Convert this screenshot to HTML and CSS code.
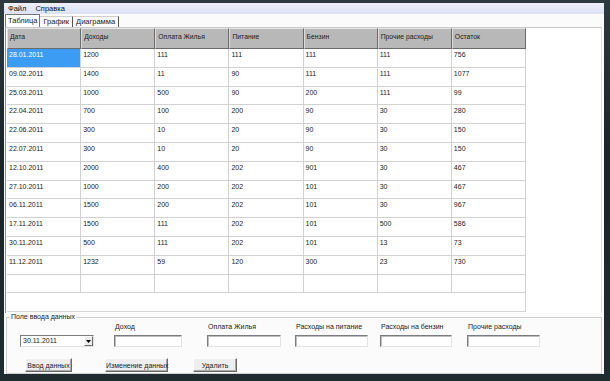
FILE: index.html
```html
<!DOCTYPE html>
<html lang="ru">
<head>
    <meta charset="UTF-8">
    <meta name="viewport" content="width=device-width, initial-scale=1.0">
    <title>Учёт расходов</title>
    <link rel="stylesheet" href="styles.css">
</head>
<body>
    <div class="window">
        <nav class="menubar">
            <span>Файл</span>
            <span>Справка</span>
        </nav>
        <div class="tabs">
            <span class="tab active">Таблица</span>
            <span class="tab">График</span>
            <span class="tab">Диаграмма</span>
        </div>
        <div class="grid-panel">
            <div class="grid">
                <div class="row head">
                    <div class="cell">Дата</div>
                    <div class="cell">Доходы</div>
                    <div class="cell">Оплата Жилья</div>
                    <div class="cell">Питание</div>
                    <div class="cell">Бензин</div>
                    <div class="cell">Прочие расходы</div>
                    <div class="cell">Остаток</div>
                </div>
                <div class="row">
                    <div class="cell sel">28.01.2011</div><div class="cell">1200</div><div class="cell">111</div><div class="cell">111</div><div class="cell">111</div><div class="cell">111</div><div class="cell">756</div>
                </div>
                <div class="row">
                    <div class="cell">09.02.2011</div><div class="cell">1400</div><div class="cell">11</div><div class="cell">90</div><div class="cell">111</div><div class="cell">111</div><div class="cell">1077</div>
                </div>
                <div class="row">
                    <div class="cell">25.03.2011</div><div class="cell">1000</div><div class="cell">500</div><div class="cell">90</div><div class="cell">200</div><div class="cell">111</div><div class="cell">99</div>
                </div>
                <div class="row">
                    <div class="cell">22.04.2011</div><div class="cell">700</div><div class="cell">100</div><div class="cell">200</div><div class="cell">90</div><div class="cell">30</div><div class="cell">280</div>
                </div>
                <div class="row">
                    <div class="cell">22.06.2011</div><div class="cell">300</div><div class="cell">10</div><div class="cell">20</div><div class="cell">90</div><div class="cell">30</div><div class="cell">150</div>
                </div>
                <div class="row">
                    <div class="cell">22.07.2011</div><div class="cell">300</div><div class="cell">10</div><div class="cell">20</div><div class="cell">90</div><div class="cell">30</div><div class="cell">150</div>
                </div>
                <div class="row">
                    <div class="cell">12.10.2011</div><div class="cell">2000</div><div class="cell">400</div><div class="cell">202</div><div class="cell">901</div><div class="cell">30</div><div class="cell">467</div>
                </div>
                <div class="row">
                    <div class="cell">27.10.2011</div><div class="cell">1000</div><div class="cell">200</div><div class="cell">202</div><div class="cell">101</div><div class="cell">30</div><div class="cell">467</div>
                </div>
                <div class="row">
                    <div class="cell">06.11.2011</div><div class="cell">1500</div><div class="cell">200</div><div class="cell">202</div><div class="cell">101</div><div class="cell">30</div><div class="cell">967</div>
                </div>
                <div class="row">
                    <div class="cell">17.11.2011</div><div class="cell">1500</div><div class="cell">111</div><div class="cell">202</div><div class="cell">101</div><div class="cell">500</div><div class="cell">586</div>
                </div>
                <div class="row">
                    <div class="cell">30.11.2011</div><div class="cell">500</div><div class="cell">111</div><div class="cell">202</div><div class="cell">101</div><div class="cell">13</div><div class="cell">73</div>
                </div>
                <div class="row">
                    <div class="cell">11.12.2011</div><div class="cell">1232</div><div class="cell">59</div><div class="cell">120</div><div class="cell">300</div><div class="cell">23</div><div class="cell">730</div>
                </div>
                <div class="row">
                    <div class="cell"></div><div class="cell"></div><div class="cell"></div><div class="cell"></div><div class="cell"></div><div class="cell"></div><div class="cell"></div>
                </div>
                <div class="filler"></div>
            </div>
        </div>
        <fieldset class="groupbox">
            <legend>Поле ввода данных</legend>
            <div class="fields">
                <div class="datepicker">
                    <span>30.11.2011</span>
                    <span class="drop">
                        <svg width="5" height="3" viewBox="0 0 5 3"><path d="M0 0h5L2.5 3z" fill="#000"/></svg>
                    </span>
                </div>
                <div class="field f-income">
                    <label>Доход</label>
                    <div class="input"></div>
                </div>
                <div class="field f-rent">
                    <label>Оплата Жилья</label>
                    <div class="input"></div>
                </div>
                <div class="field f-food">
                    <label>Расходы на питание</label>
                    <div class="input"></div>
                </div>
                <div class="field f-fuel">
                    <label>Расходы на бензин</label>
                    <div class="input"></div>
                </div>
                <div class="field f-other">
                    <label>Прочие расходы</label>
                    <div class="input"></div>
                </div>
            </div>
            <div class="buttons">
                <button class="btn b-add">Ввод данных</button>
                <button class="btn b-edit">Изменение данных</button>
                <button class="btn b-del">Удалить</button>
            </div>
        </fieldset>
    </div>
</body>
</html>
```

FILE: styles.css
```css
* {
    box-sizing: border-box;
}

body {
    margin: 0;
    padding: 3px 6px 0 4px;
    height: 381px;
    overflow: hidden;
    background: linear-gradient(#2e3a3f, #1b2427 40%, #1f2c30);
    font-family: "Liberation Sans", Arial, sans-serif;
    font-size: 7px;
    color: #222;
}

.window {
    height: 371px;
    display: flex;
    flex-direction: column;
    background-color: #fbfbfb;
}

.menubar {
    height: 11px;
    display: flex;
    align-items: center;
    gap: 9px;
    padding-left: 4px;
    background: linear-gradient(#eef0fa, #dce1f3);
    font-size: 7.5px;
    color: #111;
}

.tabs {
    height: 13px;
    display: flex;
    align-items: flex-end;
    padding-left: 1px;
    font-size: 7.5px;
}

.tab {
    height: 11px;
    line-height: 10px;
    padding: 0 3px;
    border-right: 1px solid #555;
    border-top: 1px solid #d0d0d0;
}

.tab.active {
    height: 13px;
    line-height: 11px;
    padding: 0 2px;
    border: 1px solid #777;
    border-bottom: none;
    background-color: #fff;
}

.grid-panel {
    height: 286px;
    margin: 0 2px 0 1px;
    padding-left: 1px;
    border-left: 1px solid #8a8a8a;
    border-top: 1px solid #c9c9c9;
    border-right: 1px solid #e0e0e0;
    background-color: #fff;
}

.grid {
    width: 519px;
    height: 284px;
    display: flex;
    flex-direction: column;
}

.row {
    height: 18.8px;
    display: grid;
    grid-template-columns: repeat(7, 1fr);
    flex-shrink: 0;
}

.cell {
    padding: 1px 2px;
    line-height: 9px;
    white-space: nowrap;
    overflow: hidden;
    border-right: 1px solid #d2d2d2;
    border-bottom: 1px solid #d2d2d2;
}

.cell.sel {
    background-color: #3c9cf3;
    color: #fff;
}

.head {
    height: 21px;
    background-color: #b8b8b8;
}

.head .cell {
    padding-top: 3px;
    font-size: 6.8px;
    border-top: 1px solid #e6e6e6;
    border-left: 1px solid #dcdcdc;
    border-right-color: #6a6a6a;
    border-bottom-color: #6a6a6a;
    color: #202020;
}

.filler {
    flex: 1;
    border-right: 1px solid #d6d6d6;
    border-bottom: 1px solid #d6d6d6;
}

.groupbox {
    flex: 1;
    min-width: 0;
    margin: 0 2px;
    padding: 2px 0 1px 0;
    border: 1px solid #cfcfcf;
}

.groupbox legend {
    margin-left: 3px;
    padding: 0 1px;
    line-height: 8px;
    font-size: 7px;
}

.fields {
    display: flex;
    align-items: flex-end;
    padding-left: 13px;
}

.field {
    display: flex;
    flex-direction: column;
}

.field label {
    line-height: 8px;
    margin-bottom: 4px;
    padding-left: 1px;
    white-space: nowrap;
}

.input {
    height: 12px;
    background-color: #fff;
    border: 1px solid;
    border-color: #7c7c7c #e2e2e2 #e2e2e2 #7c7c7c;
    box-shadow: inset 1px 1px 0 #bdbdbd;
}

.datepicker {
    width: 74px;
    height: 12px;
    display: flex;
    background-color: #fff;
    border: 1px solid;
    border-color: #7c7c7c #e2e2e2 #e2e2e2 #7c7c7c;
}

.datepicker span:first-child {
    padding-left: 2px;
    line-height: 10px;
}

.datepicker .drop {
    width: 9px;
    margin-left: auto;
    display: flex;
    align-items: center;
    justify-content: center;
    background-color: #ececec;
    border: 1px solid;
    border-color: #fafafa #6e6e6e #6e6e6e #fafafa;
}

.f-income { width: 68px; margin-left: 20px; }
.f-rent { width: 74px; margin-left: 25px; }
.f-food { width: 73px; margin-left: 14px; }
.f-fuel { width: 72px; margin-left: 12px; }
.f-other { width: 73px; margin-left: 15px; }

.buttons {
    display: flex;
    margin-top: 11px;
    padding-left: 18px;
}

.btn {
    height: 14px;
    padding: 0;
    white-space: nowrap;
    font-family: inherit;
    font-size: 7px;
    color: #1c1c1c;
    background-color: #eeeeee;
    border: 1px solid;
    border-color: #fdfdfd #6a6a6a #6a6a6a #fdfdfd;
    box-shadow: inset -1px -1px 0 #a8a8a8;
}

.b-add { width: 47px; }
.b-edit { width: 63px; margin-left: 33px; }
.b-del { width: 44px; margin-left: 25px; }
```
